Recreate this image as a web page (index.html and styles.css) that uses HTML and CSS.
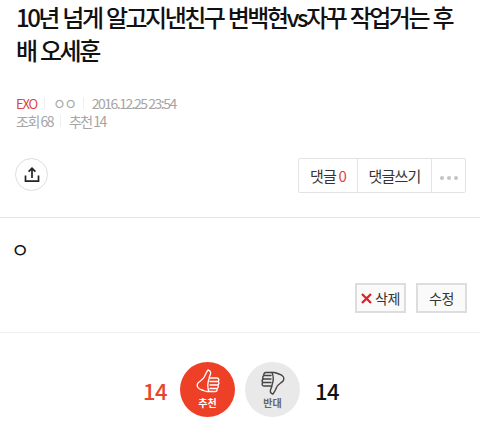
FILE: index.html
```html
<!DOCTYPE html>
<html>
<head>
    <title>10년 넘게 알고지낸친구 변백현vs자꾸 작업거는 후배 오세훈</title>
    <link rel="stylesheet" href="styles.css">
</head>
<body>
    <div class="head">
        <h1 class="title">10년 넘게 알고지낸친구 변백현vs자꾸 작업거는 후배 오세훈</h1>
        <div class="meta">
            <span class="board">EXO</span>
            <span class="sep"></span>
            <span>ㅇㅇ</span>
            <span class="sep"></span>
            <span>2016.12.25 23:54</span>
        </div>
        <div class="meta">
            <span>조회 68</span>
            <span class="sep"></span>
            <span>추천 14</span>
        </div>
    </div>
    <div class="tools">
        <button class="share">
            <svg width="16" height="16" viewBox="0 0 16 16" fill="none" stroke="#222" stroke-width="1.7">
                <path d="M8 11V1.500M4.600 4.600 8 1.300l3.400 3.300"/>
                <path d="M1.500 8.500v5.600h13V8.500"/>
            </svg>
        </button>
        <div class="btn-group">
            <a class="btn-comment">댓글 <em>0</em></a>
            <a class="btn-write">댓글쓰기</a>
            <a class="btn-more"><i></i><i></i><i></i></a>
        </div>
    </div>
    <div class="content">ㅇ</div>
    <div class="actions">
        <a class="action-btn">
            <svg width="11" height="11" viewBox="0 0 11 11" stroke="#e0232b" stroke-width="2.4"><path d="M1 1l9 9M10 1l-9 9"/></svg>
            <span>삭제</span>
        </a>
        <a class="action-btn">수정</a>
    </div>
    <div class="vote">
        <span class="count count-up">14</span>
        <div class="circle circle-up">
            <svg width="24" height="26" viewBox="0 0 24 26" fill="none" stroke="#fff" stroke-width="1.3" stroke-linejoin="round" stroke-linecap="round">
                <path d="M12 1c2 .5 3 2 2.500 4L13 9h8c2 0 2.500 2.500 1 3.500 1.500 1 1 3-.3 3.500 1 1 .6 3-.7 3.500.5 1.500-.3 3-2 3H11c-2 0-3-1-5-1.500C2 20 0 17 2 14c1.500-2 5-3 6.500-6.500C9.500 5 10.500 3 12 1z"/>
                <path d="M14 12.500h8M14 16h7.500M14 19.500h6.500M13 10c-1.500 4-1.500 9 0 12.500"/>
            </svg>
            <span>추천</span>
        </div>
        <div class="circle circle-down">
            <svg width="24" height="26" viewBox="0 0 24 26" fill="none" stroke="#444" stroke-width="1.4" stroke-linejoin="round" stroke-linecap="round">
                <g transform="rotate(180 12 13)">
                    <path d="M12 1c2 .5 3 2 2.500 4L13 9h8c2 0 2.500 2.500 1 3.500 1.500 1 1 3-.3 3.500 1 1 .6 3-.7 3.500.5 1.500-.3 3-2 3H11c-2 0-3-1-5-1.500C2 20 0 17 2 14c1.500-2 5-3 6.500-6.500C9.500 5 10.500 3 12 1z"/>
                    <path d="M14 12.500h8M14 16h7.500M14 19.500h6.500M13 10c-1.500 4-1.500 9 0 12.500"/>
                </g>
            </svg>
            <span>반대</span>
        </div>
        <span class="count count-down">14</span>
    </div>
</body>
</html>
```

FILE: styles.css
```css
body {
    margin: 0;
    background: #fff;
    color: #111;
    font-family: "Noto Sans CJK KR", "Liberation Sans", sans-serif;
    overflow: hidden;
}
.head {
    padding: 0 16px;
}
.title {
    margin: 0 0 28px;
    font-size: 24px;
    font-weight: 500;
    line-height: 33px;
    letter-spacing: -2.5px;
    word-spacing: 1.5px;
}
.meta {
    display: flex;
    align-items: center;
    gap: 7.5px;
    height: 18px;
    font-size: 14px;
    letter-spacing: -1.5px;
    color: #a5a5a5;
}
.meta .board {
    font-size: 13px;
    letter-spacing: -1.2px;
    color: #d9453f;
}
.sep {
    width: 1px;
    height: 12px;
    background: #eee;
}
.tools {
    display: flex;
    justify-content: space-between;
    align-items: flex-start;
    padding: 28px 14px 24px 15px;
    border-bottom: 1px solid #e5e5e5;
}
.share {
    display: flex;
    align-items: center;
    justify-content: center;
    width: 33px;
    height: 33px;
    padding: 0;
    background: #fff;
    border: 1px solid #ddd;
    border-radius: 50%;
}
.btn-group {
    display: flex;
    height: 33px;
    border: 1px solid #e3e3e3;
    border-radius: 2px;
    font-size: 15px;
    letter-spacing: -0.8px;
    color: #333;
}
.btn-group a {
    display: flex;
    align-items: center;
    justify-content: center;
    white-space: pre;
}
.btn-comment {
    width: 58px;
}
.btn-comment em {
    font-style: normal;
    color: #d9453f;
}
.btn-write {
    width: 73px;
    border-left: 1px solid #e3e3e3;
}
.btn-more {
    width: 33px;
    gap: 3px;
    padding-top: 4px;
    border-left: 1px solid #e3e3e3;
}
.btn-more i {
    width: 4px;
    height: 4px;
    border-radius: 50%;
    background: #c4c4c4;
}
.content {
    height: 65px;
    padding-left: 11px;
    font-size: 20px;
    line-height: 64px;
}
.actions {
    display: flex;
    justify-content: flex-end;
    gap: 10px;
    padding: 0 13px 19px;
    border-bottom: 1px solid #eee;
}
.action-btn {
    display: flex;
    align-items: center;
    justify-content: center;
    gap: 3px;
    width: 47px;
    height: 26px;
    border: 2px solid #ddd;
    background: #fafafa;
    font-size: 14px;
    letter-spacing: -0.5px;
    color: #333;
}
.vote {
    display: grid;
    grid-template-columns: 1fr 55px 55px 1fr;
    column-gap: 10px;
    align-items: center;
    padding-top: 29px;
}
.count {
    text-align: center;
    font-size: 22px;
    font-weight: 500;
    letter-spacing: -0.5px;
    color: #111;
}
.count-up {
    justify-self: end;
    width: 30px;
    color: #e8442b;
}
.count-down {
    justify-self: start;
    width: 34px;
}
.circle {
    display: flex;
    flex-direction: column;
    align-items: center;
    box-sizing: border-box;
    height: 55px;
    padding-top: 7px;
    border-radius: 50%;
    font-size: 10px;
    line-height: 16px;
    font-weight: 700;
}
.circle-up {
    background: #ee4027;
    color: #fff;
}
.circle-down {
    background: #e9e9e9;
    color: #666;
}
```
